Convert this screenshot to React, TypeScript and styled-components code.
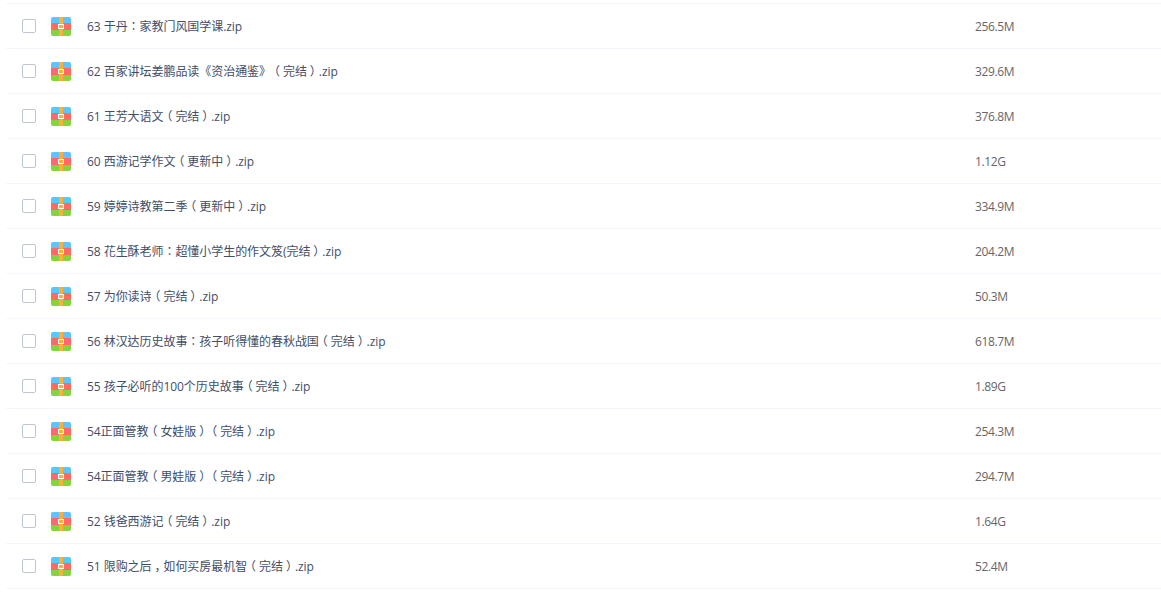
import styled, { createGlobalStyle } from "styled-components"

const GlobalStyle = createGlobalStyle`
  html, body {
    margin: 0;
    padding: 0;
    background: #fff;
    overflow: hidden;
  }
  body {
    font-family: "Open Sans", "Noto Sans CJK TC", "Noto Sans CJK SC", sans-serif;
    text-spacing-trim: space-all;
  }
`

const List = styled.div`
  display: flex;
  flex-direction: column;
  padding: 3px 0 0 6px;
`

const Row = styled.div`
  display: grid;
  grid-template-columns: 29px 36px 888px 1fr;
  align-items: center;
  height: 44px;
  padding-left: 16px;
  border-top: 1px solid #f2f6fd;
  &:last-child {
    border-bottom: 1px solid #f2f6fd;
  }
`

const CheckBox = styled.span`
  box-sizing: border-box;
  width: 14px;
  height: 14px;
  border: 1px solid #bcc6d5;
  border-radius: 2px;
  background: #fff;
`

const FileIconBox = styled.span`
  display: flex;
  margin-top: 1px;
`

const FileName = styled.span`
  font-size: 12px;
  color: #424e67;
  white-space: pre;
  letter-spacing: -0.05px;
`

// full-width punctuation sits centred in its em box in the reference
const Punct = styled.span<{ $sc?: boolean }>`
  font-feature-settings: "halt";
  margin: 0 3px;
  ${({ $sc }) => ($sc ? `font-family: "Noto Sans CJK SC", sans-serif;` : "")}
`

const FileSize = styled.span`
  font-size: 12px;
  color: #666;
  letter-spacing: -0.35px;
`

const ZipIcon = () => (
  <svg width="20" height="19" viewBox="0 0 20 19">
    <path d="M2 0h16a2 2 0 0 1 2 2v4H0V2a2 2 0 0 1 2-2z" fill="#56c8ff" />
    <rect x="0" y="6" width="20" height="7" fill="#ff6b64" />
    <path d="M0 13h20v4a2 2 0 0 1-2 2H2a2 2 0 0 1-2-2z" fill="#85d43e" />
    <rect x="8" y="0" width="4" height="19" fill="#fbb03b" />
    <rect x="7" y="7" width="6" height="5" fill="#fff" />
    <rect x="8" y="8" width="4" height="3" fill="#fbb03b" />
  </svg>
)

const files = [
  { name: "63 于丹：家教门风国学课.zip", size: "256.5M" },
  { name: "62 百家讲坛姜鹏品读《资治通鉴》（完结）.zip", size: "329.6M" },
  { name: "61 王芳大语文（完结）.zip", size: "376.8M" },
  { name: "60 西游记学作文（更新中）.zip", size: "1.12G" },
  { name: "59 婷婷诗教第二季（更新中）.zip", size: "334.9M" },
  { name: "58 花生酥老师：超懂小学生的作文笈(完结）.zip", size: "204.2M" },
  { name: "57 为你读诗（完结）.zip", size: "50.3M" },
  { name: "56 林汉达历史故事：孩子听得懂的春秋战国（完结）.zip", size: "618.7M" },
  { name: "55 孩子必听的100个历史故事（完结）.zip", size: "1.89G" },
  { name: "54正面管教（女娃版）（完结）.zip", size: "254.3M" },
  { name: "54正面管教（男娃版）（完结）.zip", size: "294.7M" },
  { name: "52 钱爸西游记（完结）.zip", size: "1.64G" },
  { name: "51 限购之后，如何买房最机智（完结）.zip", size: "52.4M" },
]

const renderName = (name: string) =>
  name.split(/([（），])/).map((part, i) => {
    if (part === "（" || part === "）") return <Punct key={i}>{part}</Punct>
    if (part === "，") return <Punct key={i} $sc>{part}</Punct>
    return part
  })

export default function App() {
  return (
    <>
      <GlobalStyle />
      <List>
        {files.map((file) => (
          <Row key={file.name}>
            <CheckBox />
            <FileIconBox>
              <ZipIcon />
            </FileIconBox>
            <FileName>{renderName(file.name)}</FileName>
            <FileSize>{file.size}</FileSize>
          </Row>
        ))}
      </List>
    </>
  )
}
